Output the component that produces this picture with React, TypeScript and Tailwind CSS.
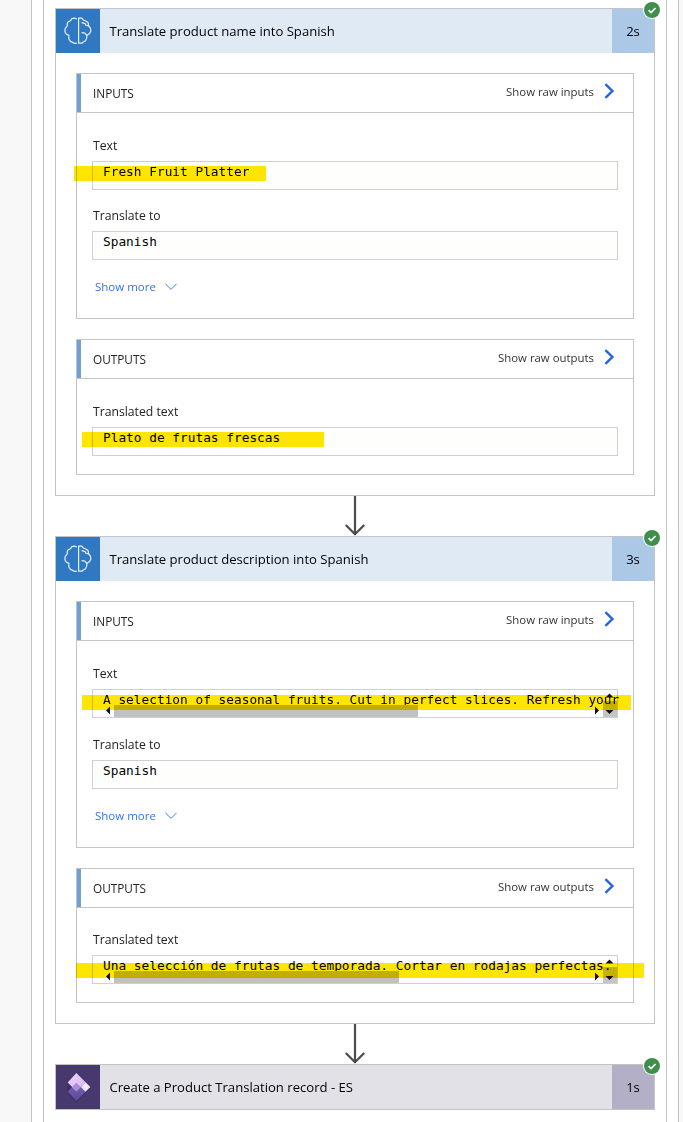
import type { ReactNode } from 'react';

const UI = "font-['Open_Sans','Noto_Sans',sans-serif]";
const MONO = "font-['DejaVu_Sans_Mono','Liberation_Mono',monospace]";

function BrainIcon() {
  return (
    <svg width="28" height="28" viewBox="0 0 28 28" fill="none" stroke="#e6f0fa" strokeWidth="1.2" strokeLinejoin="round" strokeLinecap="round">
      <path d="M12.4 1.6 L9.6 1.1 L7.4 2 L6.8 3.4 L4 5 L3.2 6.6 L3.2 9.2 L1.2 11.4 L.9 14.8 L2.2 17 L4.8 18.4 L4.9 22 L6.4 24.4 L8.8 25.4 L10 26.3 L12.4 26.2" />
      <path d="M14.6 1.6 V26.2 L17.8 26.2 L19.6 24.8 L21.8 23.4 L22.6 21.4 L22.8 18.4 L25.6 16.6 L26.9 14 L26.4 11 L24.6 8.8 L24.2 5.8 L22.2 4.2 L19.4 3 L17.8 1.2 L14.6 1.2" />
      <path d="M18 5.6 L21 6.6 L22.2 8.4 L24.6 8.9" />
      <path d="M18 15.7 L20.8 16.2 L22.8 18.4" />
    </svg>
  );
}

function DataverseIcon() {
  return (
    <svg width="28" height="32" viewBox="0 0 28 32">
      <defs>
        <linearGradient id="top" x1="0" y1="0" x2="1" y2="1">
          <stop offset="0" stopColor="#efd5ff" />
          <stop offset="1" stopColor="#d3b3ee" />
        </linearGradient>
        <linearGradient id="low" x1="0" y1="0" x2="0" y2="1">
          <stop offset="0" stopColor="#7b64b5" />
          <stop offset="1" stopColor="#5d4799" />
        </linearGradient>
      </defs>
      <path d="M3.7 13 L12.3 4 L26.6 17 L12.3 31.6 L3.2 21.4 Z" fill="#2c2050" opacity=".35" />
      <path d="M12.3 11.7 L21.6 20.7 L12.3 30 L3.7 20.7 Z" fill="url(#low)" />
      <path d="M12.3 2 L21.6 11.3 L12.3 20.3 L3.7 11.6 Z" fill="url(#top)" />
      <path d="M12.3 11.7 L16.8 16 L12.3 20.3 L8 16 Z" fill="#a98bd7" />
      <path d="M21.5 11.2 L26.3 16 L21.5 20.8 L16.8 16 Z" fill="#f3e8ff" />
    </svg>
  );
}

function Check() {
  return (
    <svg className="absolute -top-[8px] -right-[7px]" width="18" height="18" viewBox="0 0 18 18">
      <circle cx="9" cy="9" r="9" fill="#fff" />
      <circle cx="9" cy="9" r="8" fill="#3f8e4c" />
      <path d="M5.6 9.2 L8 11.6 L12.6 7" fill="none" stroke="#fff" strokeWidth="1.7" />
    </svg>
  );
}

function CardHeader({ icon, title, time, purple = false }: { icon: ReactNode; title: string; time: string; purple?: boolean }) {
  return (
    <div className={`flex h-11 ${purple ? 'bg-[#e2e1e7]' : 'bg-[#e0eaf5]'}`}>
      <div className={`flex w-11 items-center justify-center ${purple ? 'bg-[#47386e]' : 'bg-[#3078c2]'}`}>{icon}</div>
      <div className="flex flex-1 items-center pt-0.5 pl-[9.5px] text-[13.1px] text-black">
        <span className="whitespace-nowrap">{title}</span>
      </div>
      <div className={`flex w-[42px] items-center justify-center pt-0.5 text-[13.1px] text-black ${purple ? 'bg-[#b3afc6]' : 'bg-[#abc8e7]'}`}>
        {time}
      </div>
    </div>
  );
}

function Panel({ title, link, className, bodyPad = 'pt-6', children }: { title: string; link: string; className: string; bodyPad?: string; children: ReactNode }) {
  return (
    <section className={`mx-5 border border-[#c4c4c4] ${className}`}>
      <div className="flex h-[39px] items-center border-b border-[#c4c4c4]">
        <div className="h-full w-1 bg-[#709fd6]" />
        <h2 className="ml-3 pt-0.5 text-[11.8px] text-[#222]">{title}</h2>
        <div className="mr-[18px] mb-[3px] ml-auto flex items-center text-[11.4px] text-[#333]">
          <span>{link}</span>
          <svg className="ml-[10px]" width="11" height="16" viewBox="0 0 11 16">
            <path d="M1.4 1.2 L8.4 8 L1.4 14.8" fill="none" stroke="#2563e0" strokeWidth="2.4" />
          </svg>
        </div>
      </div>
      <div className={`px-[15px] ${bodyPad}`}>{children}</div>
    </section>
  );
}

interface FieldProps {
  label: string;
  value: string;
  className?: string;
  mark?: string;
  thumb?: string;
}

function Field({ label, value, className = '', mark, thumb }: FieldProps) {
  return (
    <div className={className}>
      <div className="h-[18px] pl-px text-[12.2px] leading-[18px] font-medium text-[#222]">{label}</div>
      <div className={`relative mt-[6px] h-[29px] border border-[#d0d0d0] ${thumb ? 'bg-white' : 'bg-[#fefefc]'}`}>
        <div className={`h-[27px] pl-[10px] ${thumb ? '' : 'pt-px'}`}>
          <div className={`${MONO} text-[12.8px] whitespace-pre text-black ${thumb ? 'leading-[19px]' : 'leading-[18px]'}`}>{value}</div>
        </div>
        {thumb && (
          <>
            <div className={`absolute bottom-0 left-[21px] h-3 bg-[#c1c1c1] ${thumb}`} />
            <div className="absolute right-0 bottom-0 h-4 w-[14px] bg-[#c1c1c1]/95 mix-blend-multiply" />
            <svg className="absolute inset-0" width="524" height="27" viewBox="0 0 524 27" fill="#111">
              <path d="M17 16.5 V24.5 L13 20.5 Z" />
              <path d="M502 16.5 V24.5 L506 20.5 Z" />
              <path d="M512.5 7.5 H520.5 L516.5 3.5 Z" />
              <path d="M512.5 20 H520.5 L516.5 24 Z" />
            </svg>
          </>
        )}
        {mark && <div className={`absolute h-[15px] bg-[#ffe600] mix-blend-multiply ${mark}`} />}
      </div>
    </div>
  );
}

function ShowMore() {
  return (
    <div className="mt-[17px] flex h-5 items-center pl-[3px] text-[11.5px] text-[#2f77ee]">
      <span>Show more</span>
      <svg className="mb-px ml-[9px]" width="12" height="8" viewBox="0 0 12 8">
        <path d="M.4 .8 L6 6.4 L11.6 .8" fill="none" stroke="#3b7de8" strokeWidth="1" />
      </svg>
    </div>
  );
}

function Arrow() {
  return (
    <div className="flex h-10 justify-center">
      <svg width="22" height="40" viewBox="0 0 22 40" fill="none" stroke="#4b4b4b" strokeWidth="2.2">
        <path d="M11 0 V38.5 M1.8 29 L11 38.2 L20.2 29" />
      </svg>
    </div>
  );
}

export default function App() {
  return (
    <div className={`h-[1122px] w-[683px] overflow-hidden bg-[#f8f8f8] pl-[31px] ${UI}`}>
      <div className="h-full w-[648px] border-x border-[#c4c4c4] bg-white px-[11px]">
        <div className="h-full border-x border-[#c4c4c4] px-[11px] pt-2">
          <div className="relative h-[488px] border border-[#c4c4c4]">
            <CardHeader icon={<BrainIcon />} title="Translate product name into Spanish" time="2s" />
            <Check />
            <Panel title="INPUTS" link="Show raw inputs" className="mt-5 h-[246px]">
              <Field label="Text" value="Fresh Fruit Platter" mark="-left-[19px] top-1 w-[192px]" />
              <Field label="Translate to" value="Spanish" className="mt-[17px]" />
              <ShowMore />
            </Panel>
            <Panel title="OUTPUTS" link="Show raw outputs" className="mt-5 h-[136px]">
              <Field label="Translated text" value="Plato de frutas frescas" mark="-left-[11px] top-1 w-[242px]" />
            </Panel>
          </div>
          <Arrow />
          <div className="relative h-[488px] border border-[#c4c4c4]">
            <CardHeader icon={<BrainIcon />} title="Translate product description into Spanish" time="3s" />
            <Check />
            <Panel title="INPUTS" link="Show raw inputs" className="mt-5 h-[247px]">
              <Field
                label="Text"
                value="A selection of seasonal fruits. Cut in perfect slices. Refresh your"
                mark="-left-[11px] top-[5px] w-[549px]"
                thumb="w-[304px]"
              />
              <Field label="Translate to" value="Spanish" className="mt-[18px]" />
              <ShowMore />
            </Panel>
            <Panel title="OUTPUTS" link="Show raw outputs" className="mt-5 h-[135px]" bodyPad="pt-[23px]">
              <Field
                label="Translated text"
                value="Una selección de frutas de temporada. Cortar en rodajas perfectas."
                mark="-left-[17px] top-[7px] w-[568px]"
                thumb="w-[285px]"
              />
            </Panel>
          </div>
          <Arrow />
          <div className="relative h-[46px] border border-[#c4c4c4]">
            <CardHeader icon={<DataverseIcon />} title="Create a Product Translation record - ES" time="1s" purple />
            <Check />
          </div>
        </div>
      </div>
    </div>
  );
}
